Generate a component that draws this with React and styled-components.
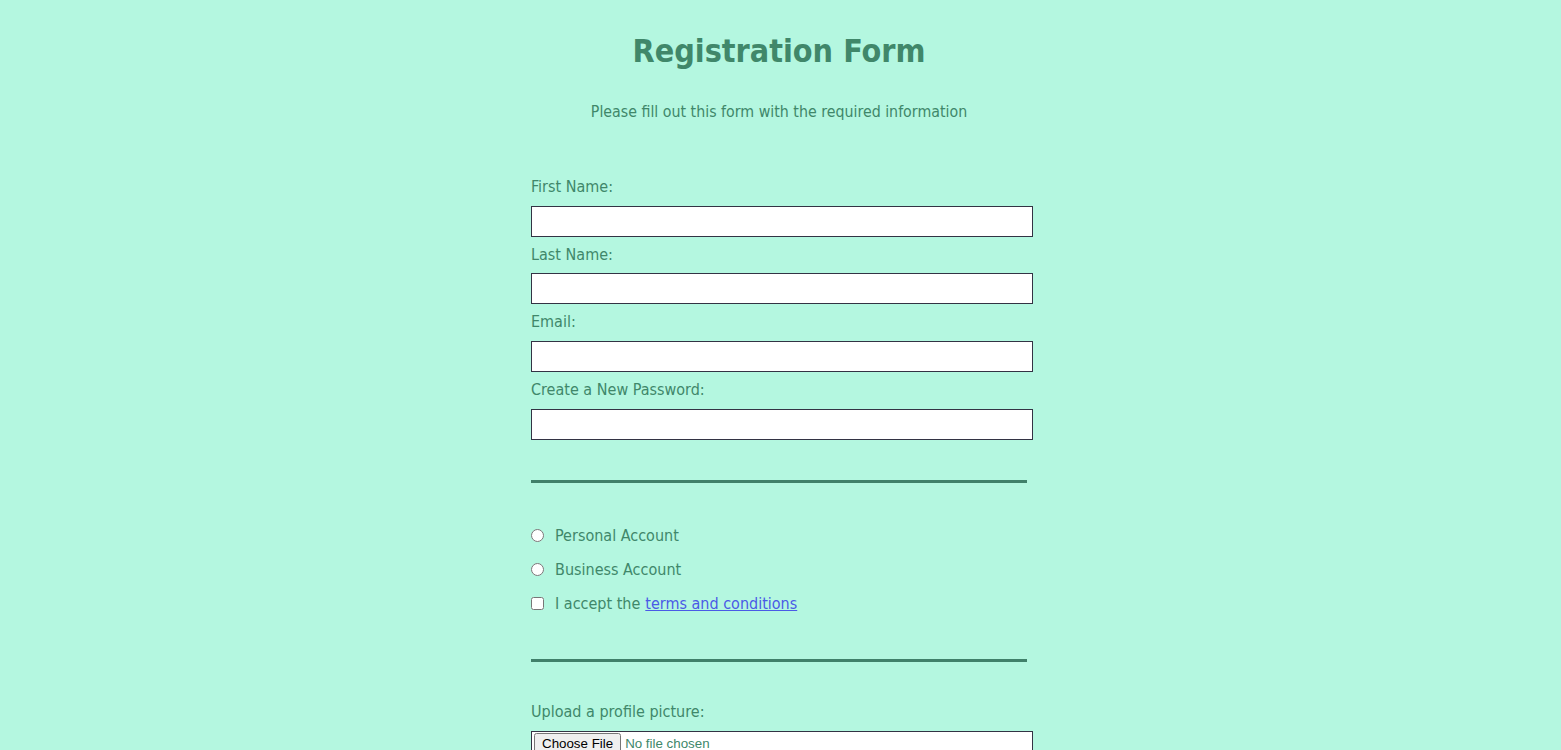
import React from "react";
import styled, { createGlobalStyle } from "styled-components";

const GlobalStyle = createGlobalStyle`
    body {
        margin: 0;
        background: #b4f7e0;
        color: #40876a;
        font-family: "DejaVu Sans Condensed", "DejaVu Sans", sans-serif;
        font-size: 16px;
    }
`;

const Page = styled.div`
    padding-right: 3px;
`;

const Title = styled.h1`
    margin: 32px auto 0;
    font-size: 32px;
    line-height: 38px;
    font-weight: bold;
    text-align: center;
    color: #40876a;
`;

const Subtitle = styled.p`
    margin: 32px auto 16px;
    font-size: 15.8px;
    line-height: 19px;
    text-align: center;
`;

const Form = styled.form`
    width: 496px;
    margin: 0 auto;
    padding-bottom: 32px;
`;

const Section = styled.fieldset`
    margin: 0;
    padding: ${(p) => p.$top || "32px"} 0 ${(p) => p.$bottom || "32px"};
    border: none;
    border-bottom: ${(p) => (p.$last ? "none" : "3px solid #40806a")};
    min-width: 0;
`;

const Label = styled.label`
    display: block;
    margin: 8px 0;
    line-height: 20.7px;
`;

const TextInput = styled.input`
    display: block;
    box-sizing: border-box;
    width: 502px;
    height: 31px;
    margin: 8px 0 0;
    padding: 1px 2px;
    border: 1px solid #333344;
    background: #fff;
    outline: none;
`;

const OptionRow = styled.label`
    display: flex;
    align-items: center;
    height: 26px;
    margin: 8px 0;
    line-height: 19px;
`;

const Choice = styled.input`
    width: 13px;
    height: 13px;
    margin: 0 11px 0 0;
    flex: none;
`;

const Link = styled.a`
    margin-left: 5px;
    color: #4a5ae6;
    text-decoration: underline;
`;

const FileInput = styled.input`
    display: block;
    box-sizing: border-box;
    width: 502px;
    height: 31px;
    margin: 8px 0 0;
    padding: 1px 2px;
    border: 1px solid #333344;
    background: #fff;
`;

const App = () => {
    const fields = [
        { label: "First Name:", type: "text" },
        { label: "Last Name:", type: "text" },
        { label: "Email:", type: "email" },
        { label: "Create a New Password:", type: "password" },
    ];

    return (
        <Page>
            <GlobalStyle />
            <Title>Registration Form</Title>
            <Subtitle>Please fill out this form with the required information</Subtitle>
            <Form onSubmit={(e) => e.preventDefault()}>
                <Section>
                    {fields.map((f) => (
                        <Label key={f.label}>
                            {f.label}
                            <TextInput type={f.type} />
                        </Label>
                    ))}
                </Section>
                <Section $bottom="34px">
                    <OptionRow>
                        <Choice type="radio" name="account" />
                        Personal Account
                    </OptionRow>
                    <OptionRow>
                        <Choice type="radio" name="account" />
                        Business Account
                    </OptionRow>
                    <OptionRow>
                        <Choice type="checkbox" />
                        I accept the<Link href="#">terms and conditions</Link>
                    </OptionRow>
                </Section>
                <Section $last $top="32px" $bottom="0">
                    <Label>
                        Upload a profile picture:
                        <FileInput type="file" />
                    </Label>
                </Section>
            </Form>
        </Page>
    );
};

export default App;
